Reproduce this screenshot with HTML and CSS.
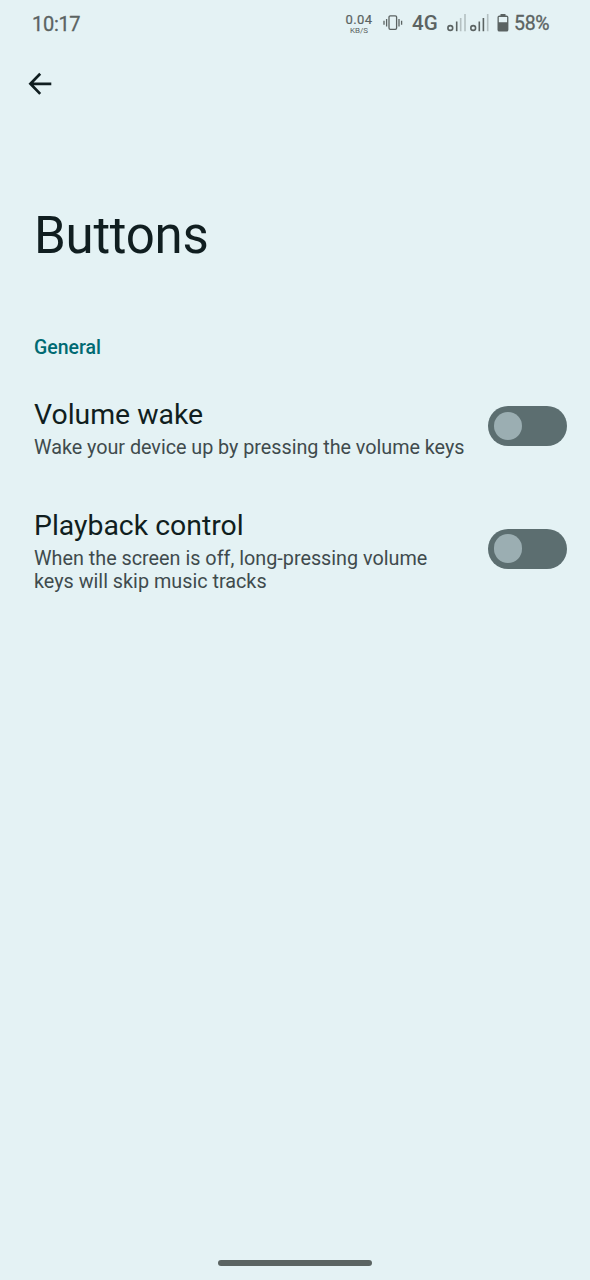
FILE: index.html
```html
<!DOCTYPE html>
<html lang="en">
<head>
<meta charset="utf-8">
<title>Buttons</title>
<link rel="stylesheet" href="styles.css">
</head>
<body>
<div class="screen">
  <header class="status">
    <span class="time">10:17</span>
    <div class="indicators">
      <div class="speed"><span class="rate">0.04</span><span class="unit">KB/S</span></div>
      <svg class="vibrate" width="20" height="18" viewBox="0 0 20 18" fill="none" stroke="currentColor" stroke-width="1.3"><rect x="6" y="1.8" width="7.6" height="13.6" rx="1.3"/><path d="M3.6 5v7.5M1 6.7v4M16 5v7.5M18.6 6.7v4"/></svg>
      <span class="network">4G</span>
      <svg class="signal" width="42" height="20" viewBox="0 0 42 20" fill="none" stroke="currentColor" stroke-width="1.6"><circle cx="3.3" cy="15" r="2.4"/><path d="M9.7 8.5v9.7"/><path class="faint" d="M13.7 5v13.2M18 1v17.2"/><circle cx="26.2" cy="15" r="2.4"/><path d="M32.3 8.5v9.7M36.4 5v13.2"/><path class="faint" d="M40.7 1v17.2"/></svg>
      <svg class="battery" width="12" height="20" viewBox="0 0 12 20"><path fill="currentColor" fill-rule="evenodd" d="M3.5 1h5v1.5h1.1Q11.4 2.5 11.4 4.3v12.4q0 1.9-1.8 1.9H2.4Q.5 18.6.5 16.7V4.3q0-1.8 1.9-1.8h1.1zM1.8 4v5.2h8.3V4z"/></svg>
      <span class="percent">58%</span>
    </div>
  </header>
  <nav class="toolbar">
    <svg width="24" height="24" viewBox="0 0 24 24" fill="none" stroke="currentColor" stroke-width="2.7"><path d="M23.3 11.8H2.5M12.2 1.7 2.4 11.8l9.8 10.1"/></svg>
  </nav>
  <main>
    <h1 class="title">Buttons</h1>
    <h2 class="category">General</h2>
    <section class="setting">
      <div class="copy">
        <div class="name">Volume wake</div>
        <div class="summary compact">Wake your device up by pressing the volume keys</div>
      </div>
      <div class="switch" role="switch" aria-checked="false"><span class="thumb"></span></div>
    </section>
    <section class="setting">
      <div class="copy">
        <div class="name">Playback control</div>
        <div class="summary">When the screen is off, long-pressing volume<br>keys will skip music tracks</div>
      </div>
      <div class="switch" role="switch" aria-checked="false"><span class="thumb"></span></div>
    </section>
  </main>
  <div class="home"></div>
</div>
</body>
</html>
```
FILE: styles.css
```css
* { box-sizing: border-box; }
body { margin: 0; background: #e4f2f4; font-family: Roboto, sans-serif; }
.screen { width: 590px; height: 1280px; display: flex; flex-direction: column; background: #e4f2f4; color: #101e20; }
.status { height: 46px; padding: 0 40px 0 32px; display: flex; align-items: flex-start; justify-content: space-between; color: #5b6362; font-weight: 500; }
.time { margin-top: 12px; font-size: 20px; line-height: 24px; font-weight: 400; letter-spacing: -.3px; -webkit-text-stroke: .3px; }
.indicators { display: flex; align-items: flex-start; }
.speed { width: 28px; margin: 13px 10px 0 0; display: flex; flex-direction: column; align-items: center; }
.rate { font-size: 13px; line-height: 14px; font-weight: 400; letter-spacing: .4px; -webkit-text-stroke: .2px; }
.unit { font-size: 8px; line-height: 8px; font-weight: 400; }
.vibrate { margin: 14px 9px 0 0; }
.network { width: 27px; margin: 11px 8px 0 0; font-size: 20.5px; line-height: 24px; letter-spacing: .2px; white-space: nowrap; }
.signal { margin: 13px 8px 0 0; }
.faint { opacity: .35; }
.battery { margin: 13px 5px 0 0; }
.percent { width: 36px; margin-top: 12px; font-size: 19.5px; line-height: 24px; font-weight: 400; letter-spacing: -.3px; -webkit-text-stroke: .3px; }
.toolbar { height: 76px; padding: 26px 0 0 28px; }
.toolbar svg { display: block; }
main { padding: 84px 23px 0 34px; }
.title { margin: 0 0 70px; font-size: 51px; line-height: 60px; font-weight: 400; letter-spacing: -.25px; }
.category { margin: 0 0 38px; font-size: 19.5px; line-height: 24px; font-weight: 500; color: #006a72; }
.setting { display: flex; align-items: center; justify-content: space-between; margin-bottom: 50px; }
.name { font-size: 28.4px; line-height: 34px; margin-bottom: 4px; }
.summary { font-size: 19.8px; line-height: 23px; color: #3f4b4d; white-space: nowrap; }
.compact { letter-spacing: -.035px; }
.switch { width: 79px; height: 40px; margin-bottom: 5px; padding: 5.5px; border-radius: 20px; background: #5c6e70; display: flex; align-items: center; }
.thumb { width: 28.5px; height: 28.5px; border-radius: 50%; background: #9baeb2; }
.home { width: 154px; height: 6px; margin: auto auto 14px 218px; border-radius: 3px; background: #5b6462; }
```
